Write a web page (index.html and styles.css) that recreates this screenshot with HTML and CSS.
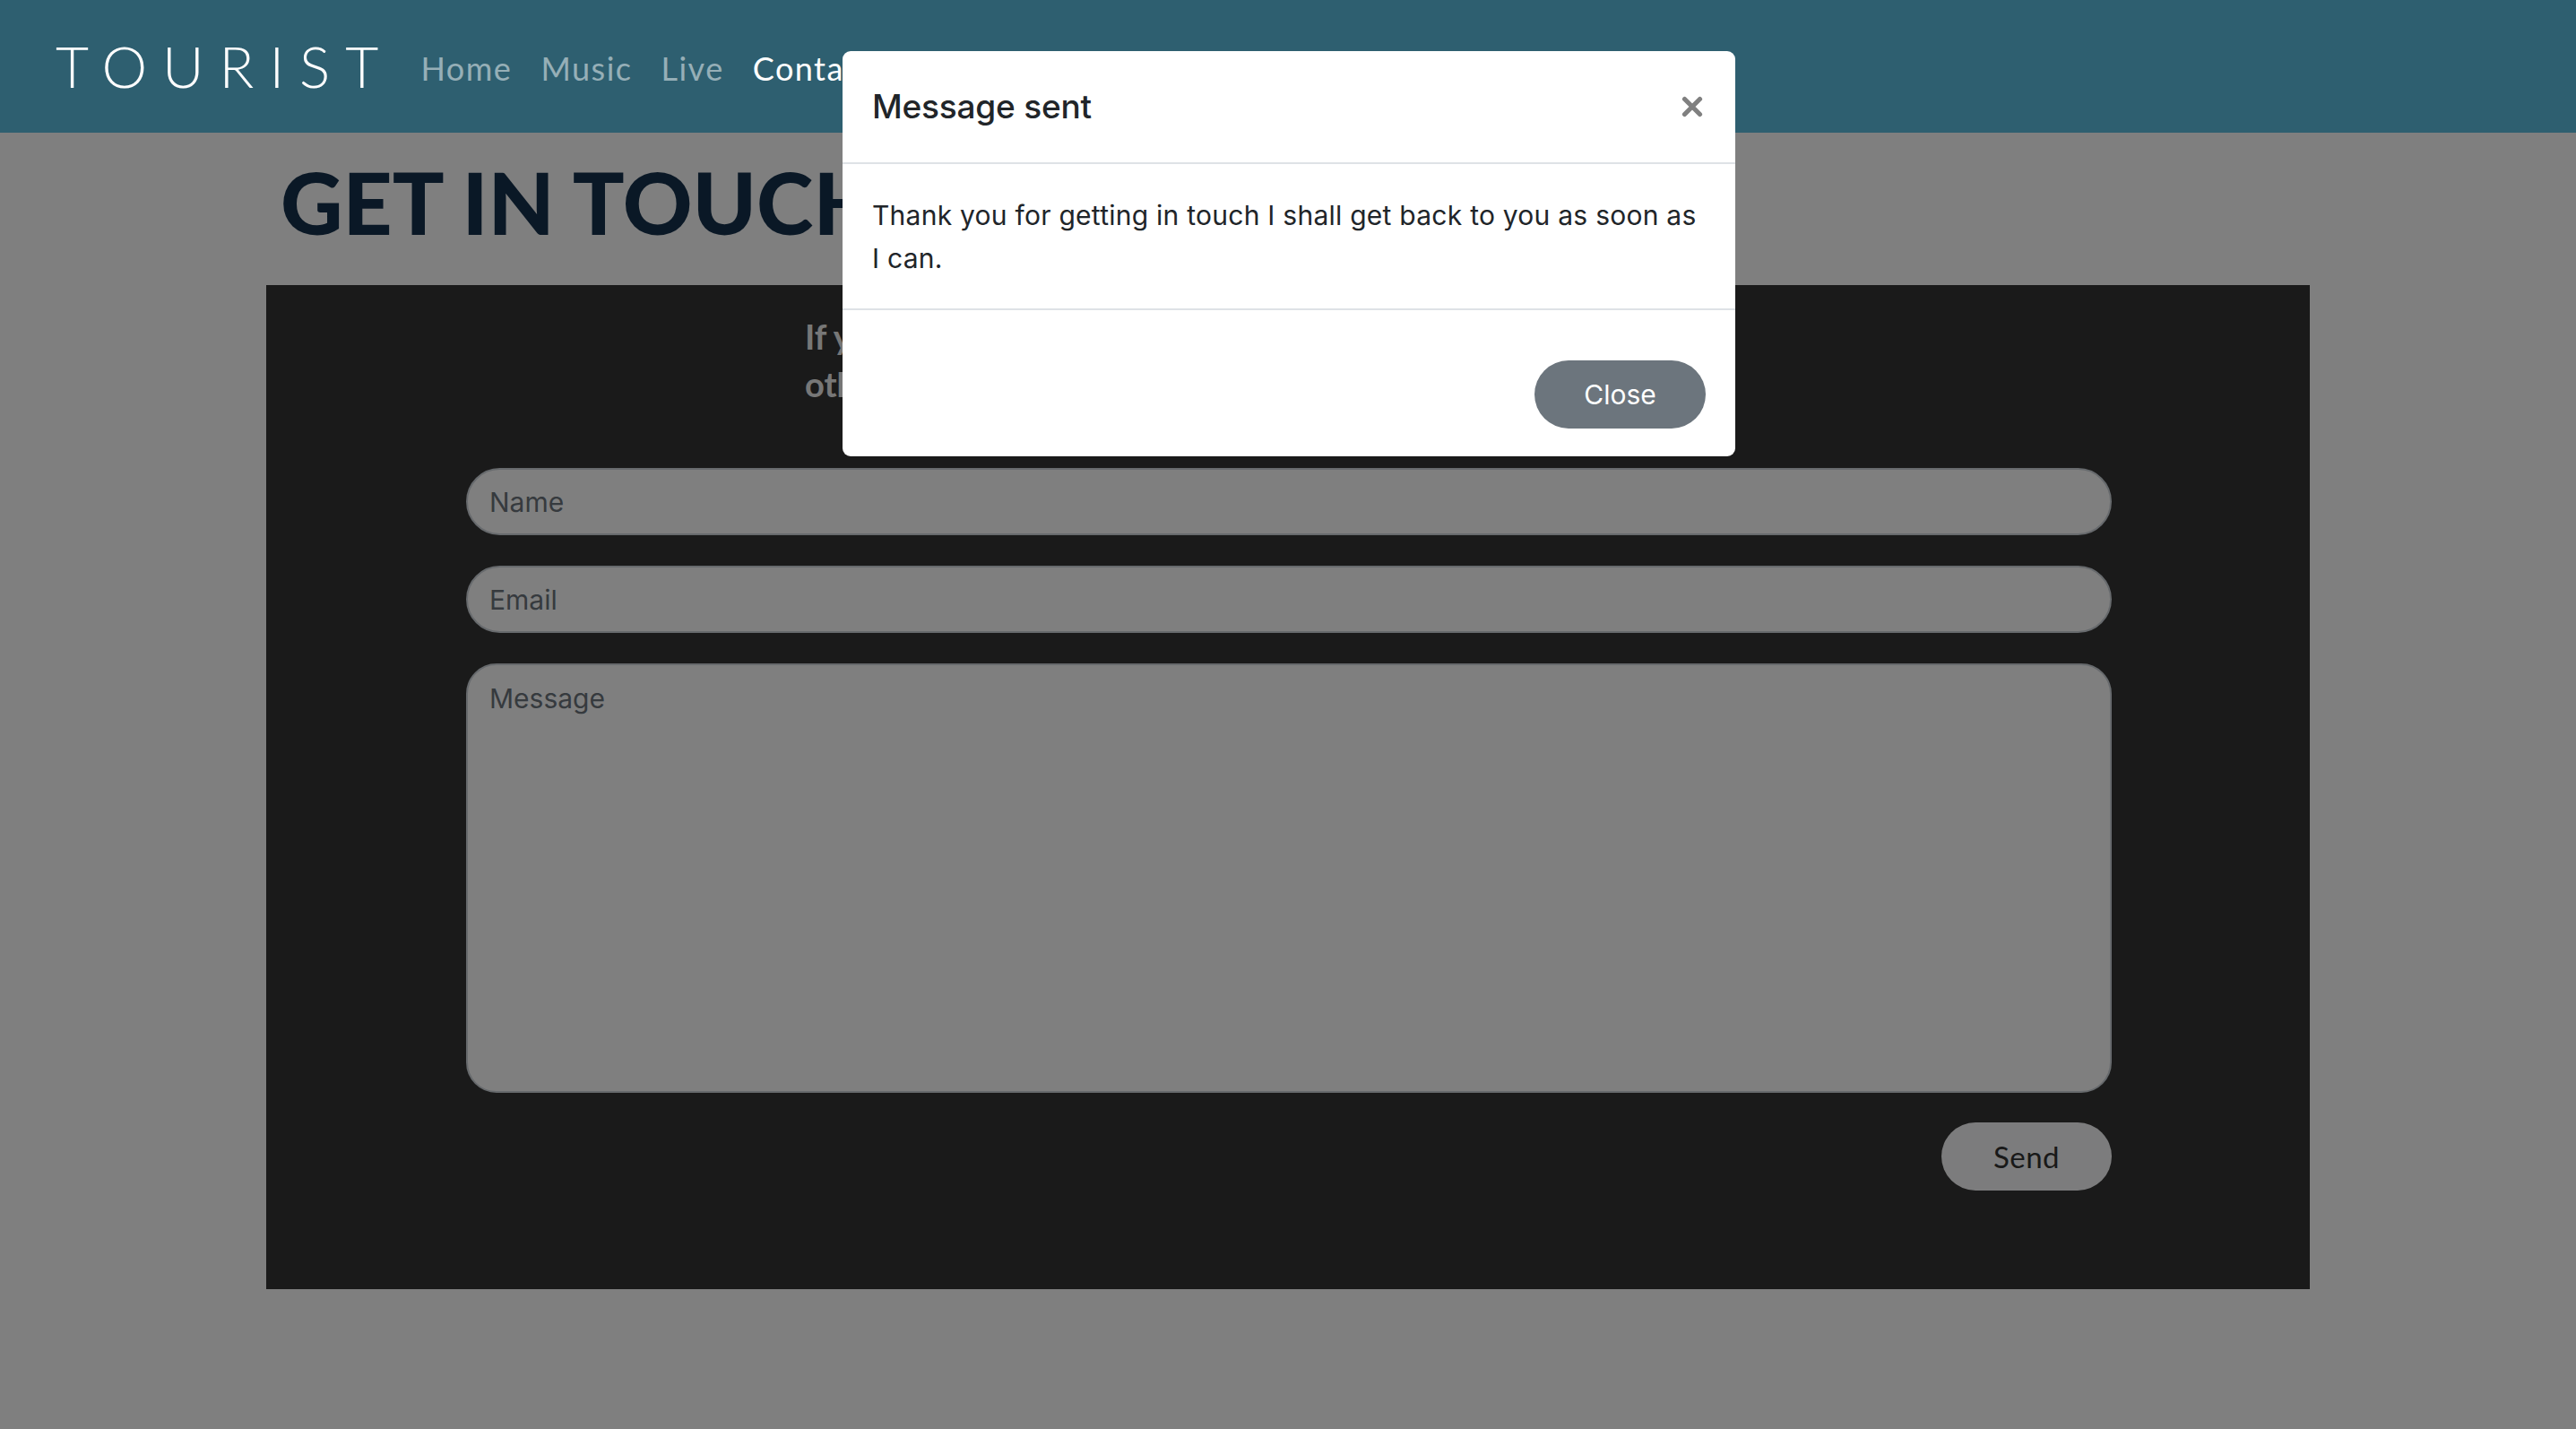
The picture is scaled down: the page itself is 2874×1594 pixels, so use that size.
FILE: index.html
```html
<!DOCTYPE html>
<html lang="en">
<head>
<meta charset="utf-8">
<title>Tourist - Contact</title>
<link rel="stylesheet" href="styles.css">
</head>
<body>
<nav class="navbar">
  <a class="brand" href="#">TOURIST</a>
  <ul class="nav-links">
    <li><a class="nav-link" href="#">Home</a></li>
    <li><a class="nav-link" href="#">Music</a></li>
    <li><a class="nav-link" href="#">Live</a></li>
    <li><a class="nav-link active" href="#">Contact</a></li>
  </ul>
</nav>

<main class="page">
  <h1 class="page-title">GET IN TOUCH</h1>
  <section class="contact-panel">
    <p class="intro">If you would like to get in touch about<br>other enquiries, use the form below.</p>
    <form class="contact-form">
      <input class="field" type="text" placeholder="Name">
      <input class="field" type="email" placeholder="Email">
      <textarea class="field field-area" placeholder="Message"></textarea>
      <div class="form-actions">
        <button class="send-btn" type="button">Send</button>
      </div>
    </form>
  </section>
</main>

<div class="backdrop"></div>

<div class="modal" role="dialog" aria-labelledby="modal-title">
  <div class="modal-header">
    <h5 class="modal-title" id="modal-title">Message sent</h5>
    <button class="modal-x" type="button" aria-label="Close">
      <svg viewBox="0 0 24 24" width="24" height="24" aria-hidden="true">
        <path d="M3.5 3.5 L20.5 20.5 M20.5 3.5 L3.5 20.5" stroke="#808080" stroke-width="5.2" stroke-linecap="round" fill="none"/>
      </svg>
    </button>
  </div>
  <div class="modal-body">
    <p>Thank you for getting in touch I shall get back to you as soon as<br>I can.</p>
  </div>
  <div class="modal-footer">
    <button class="close-btn" type="button">Close</button>
  </div>
</div>
</body>
</html>
```

FILE: styles.css
```css
* { box-sizing: border-box; }

html, body {
  margin: 0;
  padding: 0;
}

body {
  background: #ffffff;
  font-family: "Lato", "Liberation Sans", sans-serif;
  min-height: 1594px;
  position: relative;
  overflow: hidden;
}

/* Navbar */
.navbar {
  position: relative;
  z-index: 20;
  height: 148px;
  background: #2e5f70;
  display: flex;
  align-items: center;
  padding-left: 62px;
}

.brand {
  font-family: "Lato", sans-serif;
  font-weight: 300;
  font-size: 64px;
  letter-spacing: 17px;
  color: #ffffff;
  text-decoration: none;
  line-height: 1;
}

.nav-links {
  list-style: none;
  display: flex;
  margin: 0 0 0 14px;
  padding: 0;
}

.nav-link {
  display: block;
  padding: 4px 16px 0;
  font-size: 36px;
  font-weight: 400;
  letter-spacing: 1.5px;
  color: rgba(255, 255, 255, 0.5);
  text-decoration: none;
  line-height: 1;
}

.nav-link.active { color: #ffffff; }

/* Page */
.page {
  width: 2280px;
  margin: 0 auto;
}

.page-title {
  margin: 29px 0 45px;
  padding-left: 16px;
  font-family: "Lato", sans-serif;
  font-weight: 900;
  font-size: 96px;
  line-height: 96px;
  color: #14304c;
}

.contact-panel {
  background: #343434;
  height: 1120px;
  padding: 31px 221px 0 223px;
}

.intro {
  margin: 0 0 67px 378px;
  font-weight: 700;
  font-size: 38px;
  line-height: 53px;
  color: #eeeeee;
}

.contact-form {
  display: flex;
  flex-direction: column;
  gap: 34px;
}

.field {
  display: block;
  width: 100%;
  height: 75px;
  border: 2px solid #ced4da;
  border-radius: 38px;
  background: #ffffff;
  padding: 0 24px;
  font-family: "Inter", "Noto Sans", sans-serif;
  font-size: 30px;
  color: #495057;
  outline: none;
}

.field::placeholder { color: #6c757d; opacity: 1; }

.field-area {
  height: 479px;
  border-radius: 34px;
  padding: 15px 24px;
  line-height: 45px;
  resize: none;
}

.form-actions {
  display: flex;
  justify-content: flex-end;
  margin-top: -1px;
}

.send-btn {
  width: 190px;
  height: 76px;
  border: none;
  border-radius: 38px;
  background: #f8f9fa;
  color: #333333;
  font-family: "Lato", sans-serif;
  font-size: 33px;
  font-weight: 400;
  letter-spacing: 0.5px;
}

/* Backdrop */
.backdrop {
  position: fixed;
  inset: 0;
  background: rgba(0, 0, 0, 0.5);
  z-index: 10;
}

/* Modal */
.modal {
  position: absolute;
  z-index: 30;
  top: 57px;
  left: calc(50% - 497px);
  width: 996px;
  background: #ffffff;
  border-radius: 9px;
  font-family: "Inter", "Noto Sans", sans-serif;
  color: #212529;
}

.modal-header {
  height: 126px;
  border-bottom: 2px solid #dee2e6;
  display: flex;
  align-items: center;
  justify-content: space-between;
  padding: 0 36px 0 33px;
}

.modal-title {
  margin: 0;
  font-size: 37px;
  font-weight: 500;
  line-height: 1.5;
  letter-spacing: -0.2px;
}

.modal-x {
  border: none;
  background: none;
  padding: 0;
  width: 24px;
  height: 24px;
  display: flex;
}

.modal-body {
  padding: 33px 33px 32px;
}

.modal-body p {
  margin: 0;
  font-size: 30px;
  line-height: 48px;
  white-space: nowrap;
  letter-spacing: 0.25px;
}

.modal-footer {
  border-top: 2px solid #dee2e6;
  display: flex;
  justify-content: flex-end;
  padding: 56px 33px 31px;
}

.close-btn {
  width: 191px;
  height: 76px;
  border: none;
  border-radius: 38px;
  background: #6c757d;
  color: #ffffff;
  font-family: "Inter", "Noto Sans", sans-serif;
  font-size: 30px;
}
```
